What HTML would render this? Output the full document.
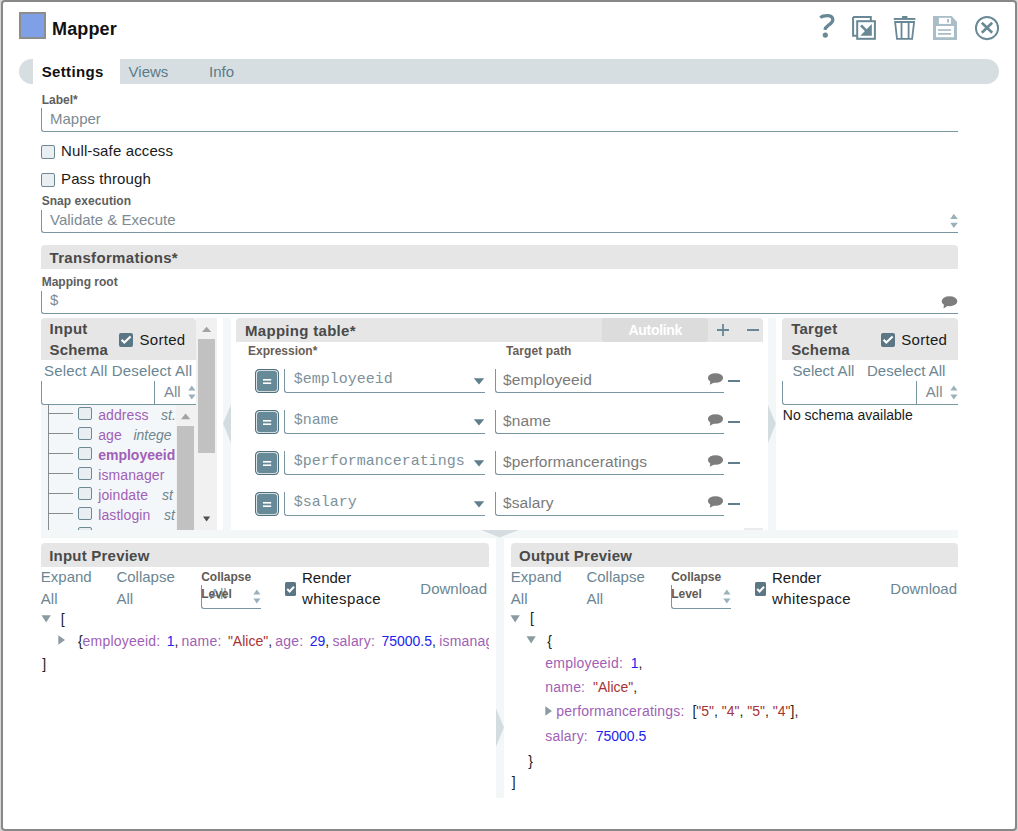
<!DOCTYPE html>
<html><head><meta charset="utf-8">
<style>
html,body{margin:0;padding:0;width:1018px;height:831px;overflow:hidden;background:#d6d6d8;}
*{box-sizing:border-box;}
body{font-family:"Liberation Sans",sans-serif;}
#dlg{position:absolute;left:1px;top:0;width:1016px;height:831px;background:#fff;border:2px solid #888;border-radius:4px;}
.a{position:absolute;}
.t{position:absolute;line-height:1;white-space:nowrap;}
.m{font-family:"Liberation Mono",monospace;}
.b{font-weight:bold;}
.hdr{position:absolute;background:#e6e6e6;border-radius:4px 4px 0 0;}
.inp{position:absolute;border-left:1px solid #7895a2;border-bottom:1px solid #7895a2;border-radius:0 0 0 3px;}
.cb{position:absolute;width:14px;height:14px;border:1px solid #6d8793;border-radius:2px;background:#e8eef1;}
.cbc{position:absolute;width:14px;height:14px;border-radius:2px;background:#5b7785;}
.lbl{font-size:12px;font-weight:bold;color:#5e5e5e;}
.lnk{color:#6a8693;font-size:15px;}
.strip{position:absolute;background:#f3f7f8;}
.sb{position:absolute;background:#f1f1f1;}
.th{position:absolute;background:#c1c1c1;}
.pu{color:#a05fb6;letter-spacing:0.2px;}
.st{color:#a63232;}
.nu{color:#2222ee;}
.ty{color:#6d868f;font-style:italic;}
</style></head><body>
<div id="dlg"></div>

<!-- header -->
<div class="a" style="left:19px;top:12px;width:27px;height:27px;border:2px solid #8d8d8d;background:#7f9fe6;"></div>
<div class="t b" style="left:52px;top:19.8px;font-size:18px;letter-spacing:0.15px;color:#111;">Mapper</div>

<!-- tabs -->
<div class="a" style="left:19px;top:59px;width:980px;height:25px;border-radius:12.5px;background:#d6dee2;"></div>
<div class="a" style="left:33px;top:59px;width:87px;height:25px;background:#fff;"></div>
<div class="t b" style="left:41.7px;top:64.3px;font-size:15px;letter-spacing:0.35px;color:#111;">Settings</div>
<div class="t" style="left:128.6px;top:64.3px;font-size:15px;color:#5b7b89;">Views</div>
<div class="t" style="left:209px;top:64.3px;font-size:15px;color:#5b7b89;">Info</div>

<!-- label -->
<div class="t lbl" style="left:41.7px;top:93.8px;">Label*</div>
<div class="inp" style="left:41px;top:108px;width:917px;height:24px;"></div>
<div class="t" style="left:50px;top:111px;font-size:15px;color:#7d8a92;">Mapper</div>

<div class="cb" style="left:41px;top:145px;"></div>
<div class="t" style="left:61px;top:143.3px;font-size:15px;color:#1a1a1a;letter-spacing:0.13px;">Null-safe access</div>
<div class="cb" style="left:41px;top:173px;"></div>
<div class="t" style="left:61px;top:171.3px;font-size:15px;color:#1a1a1a;letter-spacing:0.13px;">Pass through</div>

<div class="t lbl" style="left:41.7px;top:194.8px;letter-spacing:0.05px;">Snap execution</div>
<div class="inp" style="left:41px;top:210px;width:917px;height:23px;"></div>
<div class="t" style="left:50px;top:212.3px;font-size:15px;color:#7d8a92;">Validate &amp; Execute</div>
<svg class="a" style="left:950px;top:213px" width="9" height="16"><path d="M0.3 6 L3.8 0.7 L7.8 6Z M0.3 9.8 L7.8 9.8 L3.8 15Z" fill="#9ab1bb"/></svg>

<!-- transformations -->
<div class="hdr" style="left:41px;top:245px;width:917px;height:24px;"></div>
<div class="t b" style="left:49.5px;top:250.3px;font-size:15px;letter-spacing:0.32px;color:#4a4a4a;">Transformations*</div>

<div class="t lbl" style="left:41.7px;top:275.8px;">Mapping root</div>
<div class="inp" style="left:41px;top:291px;width:917px;height:23px;"></div>
<div class="t" style="left:50px;top:292.3px;font-size:15px;color:#7d8a92;">$</div>
<svg class="a" style="left:941px;top:296px" width="17" height="13"><ellipse cx="8.5" cy="5.2" rx="7.8" ry="5" fill="#7d7d7d"/><path d="M3 8 L2.5 12.5 L8 9Z" fill="#7d7d7d"/></svg>

<!-- input schema -->
<div class="hdr" style="left:41px;top:318px;width:155px;height:42px;"></div>
<div class="t b" style="left:49.5px;top:321.3px;font-size:15px;letter-spacing:0.3px;color:#4a4a4a;">Input</div>
<div class="t b" style="left:49.5px;top:342.3px;font-size:15px;letter-spacing:0.15px;color:#4a4a4a;">Schema</div>
<svg class="a" style="left:119px;top:332.6px" width="14" height="14"><rect x="0" y="0" width="14" height="14" rx="2" fill="#5b7785"/><path d="M2.6 6.8 L5.3 9.6 L11.6 3.4" stroke="#fff" stroke-width="2.1" fill="none"/></svg>
<div class="t" style="left:139.5px;top:331.6px;font-size:15px;color:#1a1a1a;letter-spacing:0.3px;">Sorted</div>
<div class="t lnk" style="left:44px;top:363.3px;letter-spacing:0.17px;">Select All Deselect All</div>
<div class="inp" style="left:41px;top:381px;width:114px;height:24px;"></div>
<div class="inp" style="left:154px;top:381px;width:42px;height:24px;border-radius:0;"></div>
<div class="t" style="left:164px;top:383.9px;font-size:15px;color:#7d8a92;">All</div>
<svg class="a" style="left:188px;top:385.3px" width="9" height="16"><path d="M0.3 5.5 L3.8 0.5 L7.5 5.5Z M0.3 9.5 L7.5 9.5 L3.8 14.5Z" fill="#9ab1bb"/></svg>
<div class="a" style="left:41px;top:405px;width:135px;height:125px;background:#f4f7f9;overflow:hidden;">
<div class="a" style="left:7px;top:0;width:1px;height:126px;background:#8a8a8a;"></div>
<div class="a" style="left:7px;top:8.30px;width:25px;height:1px;background:#8a8a8a;"></div>
<div class="cb" style="left:37px;top:1.80px;width:14px;height:13.5px;"></div>
<div class="t pu" style="left:57.2px;top:3.15px;font-size:14px;letter-spacing:0.1px;">address</div>
<div class="t ty" style="left:120px;top:3.15px;font-size:14px;">st.</div>
<div class="a" style="left:7px;top:28.30px;width:25px;height:1px;background:#8a8a8a;"></div>
<div class="cb" style="left:37px;top:21.80px;width:14px;height:13.5px;"></div>
<div class="t pu" style="left:57.2px;top:23.15px;font-size:14px;letter-spacing:0.1px;">age</div>
<div class="t ty" style="left:92.4px;top:23.15px;font-size:14px;">intege</div>
<div class="a" style="left:7px;top:48.30px;width:25px;height:1px;background:#8a8a8a;"></div>
<div class="cb" style="left:37px;top:41.80px;width:14px;height:13.5px;"></div>
<div class="t pu b" style="left:57.2px;top:43.15px;font-size:14px;letter-spacing:0px;">employeeid</div>
<div class="a" style="left:7px;top:68.30px;width:25px;height:1px;background:#8a8a8a;"></div>
<div class="cb" style="left:37px;top:61.80px;width:14px;height:13.5px;"></div>
<div class="t pu" style="left:57.2px;top:63.15px;font-size:14px;letter-spacing:0.1px;">ismanager</div>
<div class="a" style="left:7px;top:88.30px;width:25px;height:1px;background:#8a8a8a;"></div>
<div class="cb" style="left:37px;top:81.80px;width:14px;height:13.5px;"></div>
<div class="t pu" style="left:57.2px;top:83.15px;font-size:14px;letter-spacing:0.1px;">joindate</div>
<div class="t ty" style="left:121px;top:83.15px;font-size:14px;">st</div>
<div class="a" style="left:7px;top:108.30px;width:25px;height:1px;background:#8a8a8a;"></div>
<div class="cb" style="left:37px;top:101.80px;width:14px;height:13.5px;"></div>
<div class="t pu" style="left:57.2px;top:103.15px;font-size:14px;letter-spacing:0.1px;">lastlogin</div>
<div class="t ty" style="left:123px;top:103.15px;font-size:14px;">st</div>
<div class="a" style="left:7px;top:128.30px;width:25px;height:1px;background:#8a8a8a;"></div>
<div class="cb" style="left:37px;top:121.80px;width:14px;height:13.5px;"></div>
</div>
<div class="sb" style="left:175.5px;top:405px;width:20.5px;height:125px;"></div>
<div class="th" style="left:177.2px;top:426px;width:16.5px;height:104px;"></div>
<svg class="a" style="left:180px;top:413px" width="12" height="7"><path d="M1 6.3 L5.6 0.5 L10.3 6.3Z" fill="#a3a3a3"/></svg>
<div class="sb" style="left:196px;top:318px;width:21px;height:212px;"></div>
<div class="th" style="left:198px;top:339px;width:17px;height:113.5px;"></div>
<svg class="a" style="left:201px;top:326px" width="12" height="7"><path d="M1 6 L5.6 0.7 L10.3 6Z" fill="#a3a3a3"/></svg>
<svg class="a" style="left:202px;top:515.5px" width="10" height="7"><path d="M1 0.5 L8.2 0.5 L4.6 5.5Z" fill="#505050"/></svg>
<!-- mapping -->
<div class="strip" style="left:223px;top:318px;width:8px;height:212px;"></div>
<svg class="a" style="left:222px;top:404px" width="10" height="40"><path d="M9 0.6 L9 39 L1 19.5Z" fill="#d3dde1"/></svg>
<div class="hdr" style="left:235.8px;top:318px;width:526.8px;height:23.5px;"></div>
<div class="t b" style="left:245px;top:323.3px;font-size:15px;letter-spacing:0.3px;color:#4a4a4a;">Mapping table*</div>
<div class="a" style="left:602px;top:318px;width:105.5px;height:23.5px;background:#dcdcdc;border-radius:3px;"></div>
<div class="t b" style="left:628.5px;top:323.2px;font-size:14px;letter-spacing:-0.3px;color:#fff;">Autolink</div>
<svg class="a" style="left:716px;top:323px" width="46" height="14"><path d="M1 7 H13 M7 1 V13 M31 7 H43" stroke="#688896" stroke-width="1.8"/></svg>
<div class="t lbl" style="left:248px;top:344.8px;color:#6a5d55;">Expression*</div>
<div class="t lbl" style="left:506px;top:344.6px;letter-spacing:0.1px;color:#6a5d55;">Target path</div>
<svg class="a" style="left:255px;top:369px" width="24" height="24"><rect x="0.6" y="0.6" width="22.8" height="22.8" rx="3.6" fill="none" stroke="#51707d" stroke-width="1.2"/><rect x="2" y="2" width="20" height="20" rx="2.5" fill="#678a98"/><rect x="8" y="10" width="8.2" height="1.6" fill="#fff"/><rect x="8" y="13.4" width="8.2" height="1.6" fill="#fff"/></svg>
<div class="inp" style="left:284px;top:369px;width:201px;height:24px;"></div>
<div class="t m" style="left:293.7px;top:372.1px;font-size:15px;color:#7d919b;">$employeeid</div>
<svg class="a" style="left:473px;top:378px" width="12" height="8"><path d="M0.8 0.3 L11.2 0.3 L6 6.6Z" fill="#5f7f8d"/></svg>
<div class="inp" style="left:495px;top:369px;width:229px;height:24px;"></div>
<div class="t" style="left:503px;top:371.9px;font-size:15.5px;color:#7a7a7a;letter-spacing:0.1px;">$employeeid</div>
<svg class="a" style="left:707px;top:373px" width="17" height="13"><ellipse cx="8.5" cy="5" rx="7.6" ry="4.8" fill="#7d7d7d"/><path d="M3.5 7.5 L2.8 11.8 L8 9Z" fill="#7d7d7d"/></svg>
<div class="a" style="left:728px;top:380px;width:12px;height:2px;background:#5f7f8d;"></div>
<svg class="a" style="left:255px;top:410px" width="24" height="24"><rect x="0.6" y="0.6" width="22.8" height="22.8" rx="3.6" fill="none" stroke="#51707d" stroke-width="1.2"/><rect x="2" y="2" width="20" height="20" rx="2.5" fill="#678a98"/><rect x="8" y="10" width="8.2" height="1.6" fill="#fff"/><rect x="8" y="13.4" width="8.2" height="1.6" fill="#fff"/></svg>
<div class="inp" style="left:284px;top:410px;width:201px;height:24px;"></div>
<div class="t m" style="left:293.7px;top:413.1px;font-size:15px;color:#7d919b;">$name</div>
<svg class="a" style="left:473px;top:419px" width="12" height="8"><path d="M0.8 0.3 L11.2 0.3 L6 6.6Z" fill="#5f7f8d"/></svg>
<div class="inp" style="left:495px;top:410px;width:229px;height:24px;"></div>
<div class="t" style="left:503px;top:412.9px;font-size:15.5px;color:#7a7a7a;letter-spacing:0.1px;">$name</div>
<svg class="a" style="left:707px;top:414px" width="17" height="13"><ellipse cx="8.5" cy="5" rx="7.6" ry="4.8" fill="#7d7d7d"/><path d="M3.5 7.5 L2.8 11.8 L8 9Z" fill="#7d7d7d"/></svg>
<div class="a" style="left:728px;top:421px;width:12px;height:2px;background:#5f7f8d;"></div>
<svg class="a" style="left:255px;top:451px" width="24" height="24"><rect x="0.6" y="0.6" width="22.8" height="22.8" rx="3.6" fill="none" stroke="#51707d" stroke-width="1.2"/><rect x="2" y="2" width="20" height="20" rx="2.5" fill="#678a98"/><rect x="8" y="10" width="8.2" height="1.6" fill="#fff"/><rect x="8" y="13.4" width="8.2" height="1.6" fill="#fff"/></svg>
<div class="inp" style="left:284px;top:451px;width:201px;height:24px;"></div>
<div class="t m" style="left:293.7px;top:454.1px;font-size:15px;color:#7d919b;">$performanceratings</div>
<svg class="a" style="left:473px;top:460px" width="12" height="8"><path d="M0.8 0.3 L11.2 0.3 L6 6.6Z" fill="#5f7f8d"/></svg>
<div class="inp" style="left:495px;top:451px;width:229px;height:24px;"></div>
<div class="t" style="left:503px;top:453.9px;font-size:15.5px;color:#7a7a7a;letter-spacing:0.1px;">$performanceratings</div>
<svg class="a" style="left:707px;top:455px" width="17" height="13"><ellipse cx="8.5" cy="5" rx="7.6" ry="4.8" fill="#7d7d7d"/><path d="M3.5 7.5 L2.8 11.8 L8 9Z" fill="#7d7d7d"/></svg>
<div class="a" style="left:728px;top:462px;width:12px;height:2px;background:#5f7f8d;"></div>
<svg class="a" style="left:255px;top:492px" width="24" height="24"><rect x="0.6" y="0.6" width="22.8" height="22.8" rx="3.6" fill="none" stroke="#51707d" stroke-width="1.2"/><rect x="2" y="2" width="20" height="20" rx="2.5" fill="#678a98"/><rect x="8" y="10" width="8.2" height="1.6" fill="#fff"/><rect x="8" y="13.4" width="8.2" height="1.6" fill="#fff"/></svg>
<div class="inp" style="left:284px;top:492px;width:201px;height:24px;"></div>
<div class="t m" style="left:293.7px;top:495.1px;font-size:15px;color:#7d919b;">$salary</div>
<svg class="a" style="left:473px;top:501px" width="12" height="8"><path d="M0.8 0.3 L11.2 0.3 L6 6.6Z" fill="#5f7f8d"/></svg>
<div class="inp" style="left:495px;top:492px;width:229px;height:24px;"></div>
<div class="t" style="left:503px;top:494.9px;font-size:15.5px;color:#7a7a7a;letter-spacing:0.1px;">$salary</div>
<svg class="a" style="left:707px;top:496px" width="17" height="13"><ellipse cx="8.5" cy="5" rx="7.6" ry="4.8" fill="#7d7d7d"/><path d="M3.5 7.5 L2.8 11.8 L8 9Z" fill="#7d7d7d"/></svg>
<div class="a" style="left:728px;top:503px;width:12px;height:2px;background:#5f7f8d;"></div>
<div class="strip" style="left:768px;top:318px;width:7.5px;height:212px;"></div>
<svg class="a" style="left:767px;top:404px" width="10" height="40"><path d="M1 1 L1 39 L8.8 19.7Z" fill="#d3dde1"/></svg>
<!-- target schema -->
<div class="hdr" style="left:782px;top:318px;width:176px;height:41.5px;"></div>
<div class="t b" style="left:791.2px;top:320.9px;font-size:15px;letter-spacing:0.25px;color:#4a4a4a;">Target</div>
<div class="t b" style="left:791.2px;top:341.5px;font-size:15px;letter-spacing:0.15px;color:#4a4a4a;">Schema</div>
<svg class="a" style="left:881px;top:333px" width="14" height="14"><rect x="0" y="0" width="14" height="14" rx="2" fill="#5b7785"/><path d="M2.6 6.8 L5.3 9.6 L11.6 3.4" stroke="#fff" stroke-width="2.1" fill="none"/></svg>
<div class="t" style="left:901.2px;top:331.6px;font-size:15px;color:#1a1a1a;letter-spacing:0.3px;">Sorted</div>
<div class="t lnk" style="left:792.6px;top:362.7px;">Select All</div>
<div class="t lnk" style="left:867px;top:362.7px;">Deselect All</div>
<div class="inp" style="left:782px;top:381px;width:134.5px;height:24px;"></div>
<div class="inp" style="left:916px;top:381px;width:42px;height:24px;border-radius:0;"></div>
<div class="t" style="left:925.8px;top:383.7px;font-size:15px;color:#7d8a92;">All</div>
<div class="a" style="left:948px;top:383px;width:10px;height:18px;overflow:hidden;"><svg class="a" style="left:2px;top:2.3px" width="9" height="16"><path d="M0.3 5.5 L3.8 0.5 L7.5 5.5Z M0.3 9.5 L7.5 9.5 L3.8 14.5Z" fill="#9ab1bb"/></svg></div>
<div class="t" style="left:782.8px;top:408px;font-size:14px;color:#1a1a1a;">No schema available</div>
<div class="strip" style="left:41px;top:530px;width:917px;height:7.7px;"></div>
<svg class="a" style="left:481px;top:530px" width="38" height="8"><path d="M0.2 0 L37.6 0 L18.7 7.4Z" fill="#d5dde0"/></svg>
<!-- Input Preview -->
<div class="hdr" style="left:41px;top:543px;width:448px;height:23.7px;"></div>
<div class="t b" style="left:49.2px;top:547.8px;font-size:15px;letter-spacing:0.22px;color:#4a4a4a;">Input Preview</div>
<div class="t lnk" style="left:40.8px;top:569.4px;">Expand</div>
<div class="t lnk" style="left:40.8px;top:590.8px;">All</div>
<div class="t lnk" style="left:116.4px;top:569.4px;">Collapse</div>
<div class="t lnk" style="left:116.4px;top:590.8px;">All</div>
<div class="t lbl" style="left:201.2px;top:570.8px;color:#5f5a56;">Collapse</div>
<div class="inp" style="left:201px;top:585px;width:60px;height:24px;"></div>
<div class="t" style="left:210px;top:585.5px;font-size:15px;color:#8f9ca3;">All</div>
<div class="t lbl" style="left:201.2px;top:587.8px;color:#5f5a56;">Level</div>
<svg class="a" style="left:253px;top:589px" width="9" height="16"><path d="M0.3 5.5 L3.8 0.5 L7.5 5.5Z M0.3 9.5 L7.5 9.5 L3.8 14.5Z" fill="#9ab1bb"/></svg>
<svg class="a" style="left:285px;top:582px" width="12" height="14"><rect x="0" y="0" width="11" height="14" rx="1.5" fill="#5b7785"/><path d="M2.2 7 L4.6 9.5 L9 4.8" stroke="#fff" stroke-width="2" fill="none"/></svg>
<div class="t" style="left:302px;top:570.3px;font-size:15px;color:#1a1a1a;">Render</div>
<div class="t" style="left:302px;top:591.2px;font-size:15px;color:#1a1a1a;letter-spacing:0.4px;">whitespace</div>
<div class="t lnk" style="left:420.3px;top:580.8px;">Download</div>
<!-- Output Preview -->
<div class="hdr" style="left:511px;top:543px;width:447px;height:23.7px;"></div>
<div class="t b" style="left:519px;top:547.8px;font-size:15px;letter-spacing:0.22px;color:#4a4a4a;">Output Preview</div>
<div class="t lnk" style="left:510.8px;top:569.4px;">Expand</div>
<div class="t lnk" style="left:510.8px;top:590.8px;">All</div>
<div class="t lnk" style="left:586.4px;top:569.4px;">Collapse</div>
<div class="t lnk" style="left:586.4px;top:590.8px;">All</div>
<div class="t lbl" style="left:671.2px;top:570.8px;color:#5f5a56;">Collapse</div>
<div class="inp" style="left:671px;top:585px;width:60px;height:24px;"></div>
<div class="t lbl" style="left:671.2px;top:587.8px;color:#5f5a56;">Level</div>
<svg class="a" style="left:723px;top:589px" width="9" height="16"><path d="M0.3 5.5 L3.8 0.5 L7.5 5.5Z M0.3 9.5 L7.5 9.5 L3.8 14.5Z" fill="#9ab1bb"/></svg>
<svg class="a" style="left:755px;top:582px" width="12" height="14"><rect x="0" y="0" width="11" height="14" rx="1.5" fill="#5b7785"/><path d="M2.2 7 L4.6 9.5 L9 4.8" stroke="#fff" stroke-width="2" fill="none"/></svg>
<div class="t" style="left:772px;top:570.3px;font-size:15px;color:#1a1a1a;">Render</div>
<div class="t" style="left:772px;top:591.2px;font-size:15px;color:#1a1a1a;letter-spacing:0.4px;">whitespace</div>
<div class="t lnk" style="left:890.3px;top:580.8px;">Download</div>
<svg class="a" style="left:40.5px;top:615.3px" width="11" height="8"><path d="M0.5 0.3 L9.8 0.3 L5.15 7.5Z" fill="#8a9ba2"/></svg>
<div class="t" style="left:60.7px;top:612px;font-size:14px;color:#222;">[</div>
<svg class="a" style="left:58.2px;top:634.8px" width="8" height="11"><path d="M0.3 0.3 L7 5 L0.3 9.7Z" fill="#8a9ba2"/></svg>
<div class="a" style="left:41px;top:630px;width:448px;height:22px;overflow:hidden;">
<div class="t" style="left:36.9px;top:4.3px;font-size:14px;color:#222;letter-spacing:0px;word-spacing:-0.7px;">{<span class="pu">employeeid</span><span class="pu">:</span>&nbsp; <span class="nu">1</span>, <span class="pu">name:</span>&nbsp; <span class="st">"Alice"</span>, <span class="pu">age:</span>&nbsp; <span class="nu">29</span>, <span class="pu">salary:</span>&nbsp; <span class="nu">75000.5</span>, <span class="pu">ismanager:</span> <span class="nu">true</span></div>
</div>
<div class="t" style="left:42.3px;top:657.3px;font-size:14px;color:#222;">]</div>
<div class="strip" style="left:496px;top:537.7px;width:7.7px;height:260px;"></div>
<svg class="a" style="left:496px;top:708px" width="8" height="39"><path d="M0 0.3 L7.9 19.5 L0 38.7Z" fill="#d3dde1"/></svg>
<svg class="a" style="left:510.2px;top:615px" width="11" height="8"><path d="M0.5 0.3 L9.8 0.3 L5.15 7.5Z" fill="#8a9ba2"/></svg>
<div class="t" style="left:529.9px;top:611.2px;font-size:14px;color:#222;">[</div>
<svg class="a" style="left:526px;top:636px" width="11" height="8"><path d="M0.5 0.3 L9.8 0.3 L5.15 7.5Z" fill="#8a9ba2"/></svg>
<div class="t" style="left:547.2px;top:634.2px;font-size:14px;color:#222;">{</div>
<div class="t" style="left:545.3px;top:656.1px;font-size:14px;color:#222;"><span class="pu">employeeid:</span>&nbsp; <span class="nu">1</span>,</div>
<div class="t" style="left:545.3px;top:679.6px;font-size:14px;color:#222;"><span class="pu">name:</span>&nbsp; <span class="st">"Alice"</span>,</div>
<svg class="a" style="left:545.3px;top:706px" width="8" height="11"><path d="M0.3 0.3 L7 5 L0.3 9.7Z" fill="#8a9ba2"/></svg>
<div class="t" style="left:556.3px;top:704.2px;font-size:14px;color:#222;"><span class="pu">performanceratings:</span>&nbsp; [<span class="st">"5"</span>, <span class="st">"4"</span>, <span class="st">"5"</span>, <span class="st">"4"</span>],</div>
<div class="t" style="left:545.3px;top:728.8px;font-size:14px;color:#222;"><span class="pu">salary:</span>&nbsp; <span class="nu">75000.5</span></div>
<div class="t" style="left:528.3px;top:753.8px;font-size:14px;color:#222;">}</div>
<div class="t" style="left:511.8px;top:775.4px;font-size:14px;color:#222;">]</div>
<!-- icons -->
<svg class="a" style="left:816px;top:10px" width="22" height="32"><path d="M4.3 7.6 C6.5 5.6 9.5 5.5 12 5.6 C14.8 5.8 16.8 7.2 16.8 9.8 C16.8 12.6 14.5 13.8 12.3 15.3 C10.4 16.6 9.2 17.8 9 19.8" stroke="#688896" stroke-width="3.3" fill="none"/><circle cx="9.3" cy="25.1" r="2.6" fill="#688896"/></svg>
<svg class="a" style="left:850px;top:14px" width="28" height="28"><path d="M3.1 3.1 H20.8 V7.2 M7.2 21.7 H3.1 V3.1" stroke="#688896" stroke-width="2" fill="none"/><rect x="7.2" y="7.2" width="17.7" height="17.6" stroke="#688896" stroke-width="2" fill="none"/><path d="M21.8 10.1 V21.7 H10.3Z" fill="#688896"/><path d="M11 11.3 L17 17.3" stroke="#688896" stroke-width="2.6"/></svg>
<svg class="a" style="left:892px;top:14px" width="26" height="28"><rect x="10.1" y="2" width="5.3" height="2" fill="#688896"/><rect x="1.8" y="4" width="21.6" height="1.9" fill="#688896"/><path d="M3.1 8 L22.1 8 L20.1 24.9 L5 24.9Z M9.5 8 V25 M16.6 8 V25" stroke="#688896" stroke-width="1.8" fill="none"/></svg>
<svg class="a" style="left:932px;top:15px" width="27" height="26"><path d="M1 1.1 H19.7 L25 7 V24.9 H1Z" fill="#a9bec7"/><rect x="6.9" y="2.8" width="12" height="6.1" fill="#fff"/><rect x="15.1" y="4" width="1.9" height="3.6" fill="#a9bec7"/><rect x="4" y="11" width="18" height="11.2" fill="#fff"/><rect x="6" y="14.2" width="13.1" height="1.7" fill="#a9bec7"/><rect x="6" y="18" width="13.1" height="1.8" fill="#a9bec7"/></svg>
<svg class="a" style="left:974px;top:15px" width="26" height="26"><circle cx="13" cy="13.1" r="11.1" stroke="#688896" stroke-width="1.9" fill="none"/><path d="M7.8 7.8 L18.2 17.7 M18.2 7.8 L7.8 17.7" stroke="#688896" stroke-width="2.6"/></svg>
<div class="a" style="left:744px;top:528px;width:19px;height:2px;background:#ebebeb;"></div>
</body></html>
